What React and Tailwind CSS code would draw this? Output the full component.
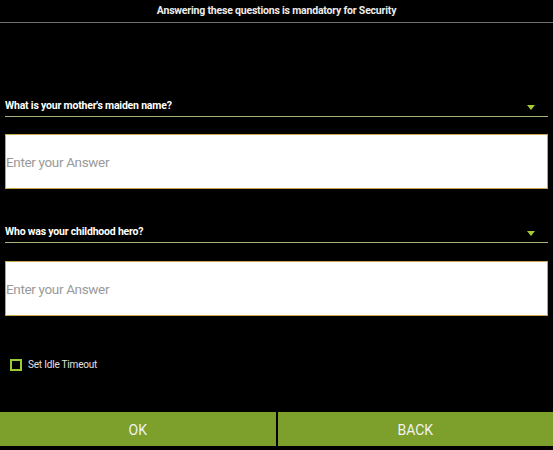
import React, { useState } from 'react';

const QUESTIONS = [
  "What is your mother's maiden name?",
  'Who was your childhood hero?',
];

function QuestionSelect({ label }) {
  return (
    <div className="mx-[5px] h-[21px] flex items-center justify-between border-b border-[#a3b57c]">
      <span className="text-[10.5px] tracking-[-0.2px] font-bold text-white leading-none">{label}</span>
      <svg width="8" height="5" viewBox="0 0 8 5" className="mr-[13px] mt-[2px]">
        <polygon points="0,0 8,0 4,5" fill="#a6c93a" />
      </svg>
    </div>
  );
}

function AnswerInput() {
  return (
    <input
      type="text"
      placeholder="Enter your Answer"
      className="mx-[5px] w-[543px] h-[55px] bg-white border border-[#c9a650] pl-0 pt-[1px] text-[13.5px] tracking-[-0.35px] text-gray-800 placeholder:text-[#9a9a9a] outline-none"
    />
  );
}

export default function App() {
  const [idle, setIdle] = useState(false);

  return (
    <div className="w-[553px] h-[450px] bg-black flex flex-col font-['Roboto','Liberation_Sans',sans-serif]">
      {/* header */}
      <div className="h-[23px] flex items-center justify-center border-b border-[#6e6e6e] text-[10.5px] tracking-[-0.2px] font-bold text-[#ececec]">
        Answering these questions is mandatory for Security
      </div>

      <div className="mt-[73px]">
        <QuestionSelect label={QUESTIONS[0]} />
      </div>
      <div className="mt-[17px] flex">
        <AnswerInput />
      </div>

      <div className="mt-[33px]">
        <QuestionSelect label={QUESTIONS[1]} />
      </div>
      <div className="mt-[18px] flex">
        <AnswerInput />
      </div>

      {/* idle timeout */}
      <label className="mt-[41px] ml-[10px] flex items-center gap-[6px] cursor-pointer">
        <span
          onClick={() => setIdle(!idle)}
          className="w-[12px] h-[12px] border-2 border-[#9ccc33] flex items-center justify-center"
        >
          {idle && <span className="w-[4px] h-[4px] bg-[#9ccc33]" />}
        </span>
        <span className="text-[10px] tracking-[-0.2px] text-[#e0e0e0]">Set Idle Timeout</span>
      </label>

      {/* buttons */}
      <div className="mt-auto mb-[4px] h-[34px] flex gap-[2px]">
        <button className="flex-1 bg-[#7d9f2b] text-[#f2f2f2] text-[14px] pt-[2px]">OK</button>
        <button className="flex-1 bg-[#7d9f2b] text-[#f2f2f2] text-[14px] pt-[2px]">BACK</button>
      </div>
    </div>
  );
}
